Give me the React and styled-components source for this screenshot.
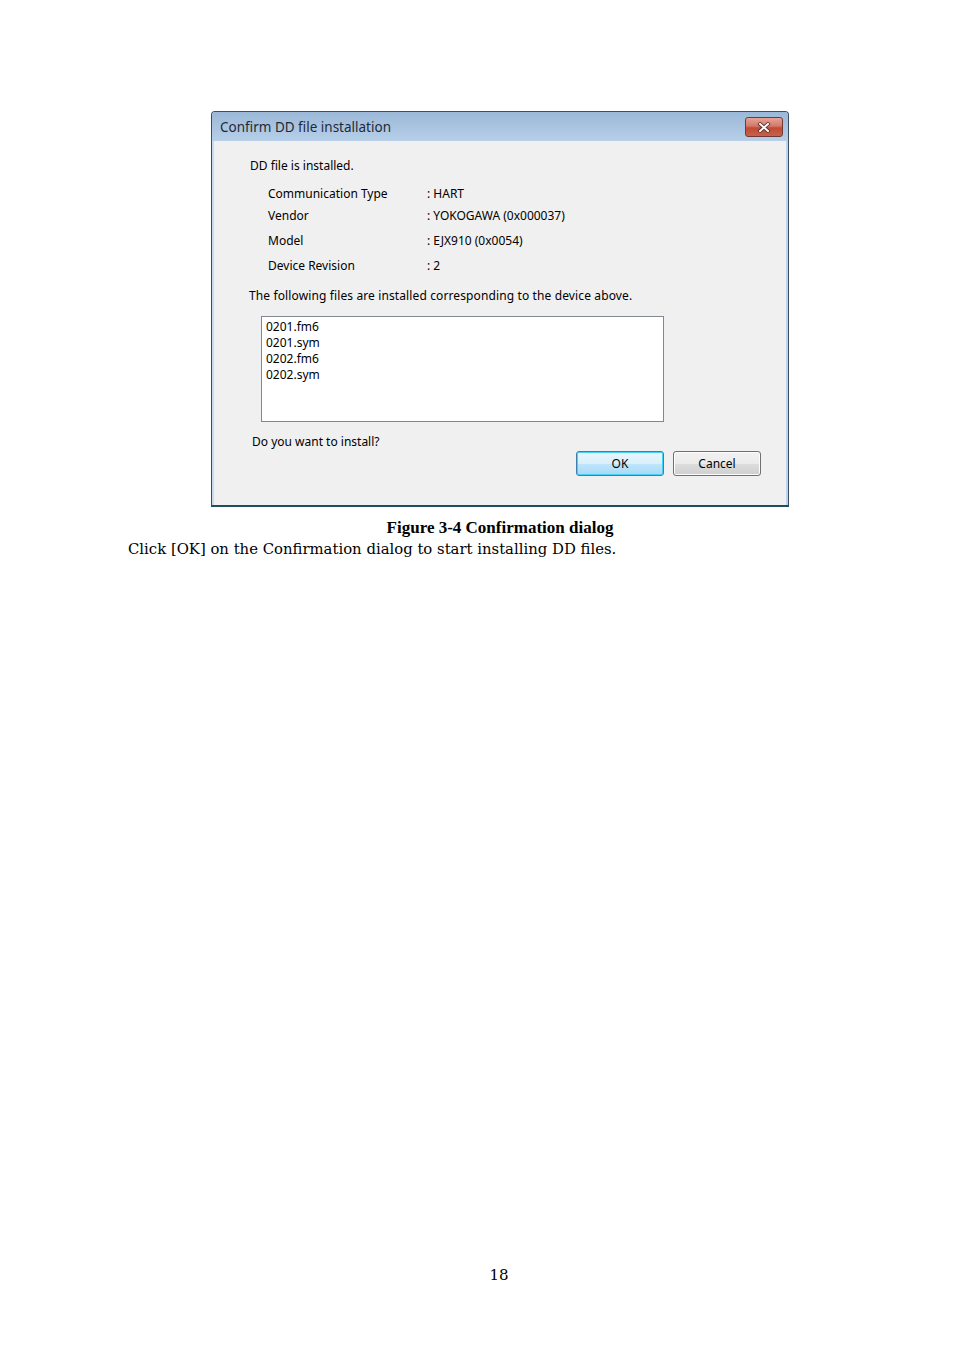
import React from "react";
import styled, { createGlobalStyle } from "styled-components";

const Global = createGlobalStyle`
  html, body { margin: 0; padding: 0; background: #ffffff; }
  body { width: 954px; height: 1350px; overflow: hidden; }
`;

const Page = styled.div`
  width: 954px;
  height: 1350px;
  box-sizing: border-box;
  padding: 111px 0 0 128px;
  display: flex;
  flex-direction: column;
  position: relative;
`;

const Column = styled.div`
  width: 744px;
  display: flex;
  flex-direction: column;
`;

const Dialog = styled.div`
  align-self: center;
  width: 578px;
  height: 396px;
  box-sizing: border-box;
  display: flex;
  flex-direction: column;
  background: #f0f0f0;
  border: 1px solid #3d4f5e;
  border-radius: 4px 4px 0 0;
  border-bottom: 2px solid #1f4f5f;
  box-shadow: inset -2px 0 0 #b9d3ec, inset 2px 0 0 #c6dbef;
  font-family: "Noto Sans", "DejaVu Sans", sans-serif;
  color: #000;
`;

const TitleBar = styled.div`
  height: 29px;
  display: flex;
  align-items: center;
  justify-content: space-between;
  padding: 0 5px 0 8px;
  background: linear-gradient(#9bb8d8, #b7cfe8);
  border-radius: 3px 3px 0 0;
`;

const Title = styled.span`
  font-size: 13.5px;
  color: #1e2a36;
`;

const Close = styled.div`
  width: 38px;
  height: 20px;
  box-sizing: border-box;
  border: 1px solid #6e3a33;
  border-radius: 3px;
  background: linear-gradient(#e8a296 0%, #d4796a 45%, #c04a35 55%, #c8624c 100%);
  display: flex;
  align-items: center;
  justify-content: center;
  margin-top: 1px;
`;

const Body = styled.div`
  flex: 1;
  display: flex;
  flex-direction: column;
  padding: 16px 27px 0 38px;
  font-size: 12px;
`;

const Heading = styled.div`
  line-height: 18px;
`;

const InfoGrid = styled.div`
  display: grid;
  grid-template-columns: 159px auto;
  margin: 10px 0 0 18px;
`;

const Cell = styled.div`
  line-height: 18px;
  height: 18px;
  margin-top: ${(p) => p.$gap || 0}px;
`;

const Following = styled.div`
  margin-top: 12px;
  line-height: 18px;
  margin-left: -1px;
  letter-spacing: 0.12px;
`;

const ListBox = styled.div`
  margin: 11px 0 0 11px;
  width: 403px;
  height: 106px;
  box-sizing: border-box;
  background: #ffffff;
  border: 1px solid #828790;
  padding: 2px 4px;
`;

const ListItem = styled.div`
  line-height: 16px;
  height: 16px;
`;

const Question = styled.div`
  margin: 11px 0 0 2px;
  line-height: 18px;
`;

const Buttons = styled.div`
  display: flex;
  justify-content: flex-end;
  gap: 9px;
  margin-top: 0;
`;

const Button = styled.div`
  width: 88px;
  height: 25px;
  box-sizing: border-box;
  border-radius: 3px;
  display: flex;
  align-items: center;
  justify-content: center;
  font-size: 12px;
  border: 1px solid ${(p) => (p.$default ? "#3c7fb1" : "#707070")};
  box-shadow: ${(p) => (p.$default ? "inset 0 0 0 1px #48d1f8" : "inset 0 0 0 1px #fcfcfc")};
  background: ${(p) =>
    p.$default
      ? "linear-gradient(#eaf6fd 0%, #d9f0fc 50%, #bee6fd 51%, #a7d9f5 100%)"
      : "linear-gradient(#f2f2f2 0%, #ebebeb 50%, #dddddd 51%, #cfcfcf 100%)"};
`;

const Caption = styled.div`
  text-align: center;
  font-family: "Liberation Serif", serif;
  font-weight: bold;
  font-size: 17px;
  line-height: 20px;
  margin-top: 11px;
`;

const Paragraph = styled.div`
  font-family: "DejaVu Serif", "Liberation Serif", serif;
  font-size: 14.85px;
  line-height: 20px;
  margin-top: 1px;
`;

const PageNumber = styled.div`
  position: absolute;
  top: 1265px;
  left: 44px;
  width: 910px;
  text-align: center;
  font-family: "DejaVu Serif", "Liberation Serif", serif;
  font-size: 15px;
  line-height: 20px;
`;

const rows = [
  ["Communication Type", ": HART", 0],
  ["Vendor", ": YOKOGAWA (0x000037)", 4],
  ["Model", ": EJX910 (0x0054)", 7],
  ["Device Revision", ": 2", 7],
];

const CloseGlyph = () => (
  <svg width="14" height="11" viewBox="0 0 14 11">
    <path d="M3 2 L11 9 M11 2 L3 9" stroke="#5a2a22" strokeWidth="3.6" strokeLinecap="square" />
    <path d="M3 2 L11 9 M11 2 L3 9" stroke="#ffffff" strokeWidth="2" strokeLinecap="square" />
  </svg>
);

export default function App() {
  return (
    <>
      <Global />
      <Page>
        <Column>
          <Dialog>
            <TitleBar>
              <Title>Confirm DD file installation</Title>
              <Close>
                <CloseGlyph />
              </Close>
            </TitleBar>
            <Body>
              <Heading>DD file is installed.</Heading>
              <InfoGrid>
                {rows.map(([k, v, g]) => (
                  <React.Fragment key={k}>
                    <Cell $gap={g}>{k}</Cell>
                    <Cell $gap={g}>{v}</Cell>
                  </React.Fragment>
                ))}
              </InfoGrid>
              <Following>The following files are installed corresponding to the device above.</Following>
              <ListBox>
                {["0201.fm6", "0201.sym", "0202.fm6", "0202.sym"].map((f) => (
                  <ListItem key={f}>{f}</ListItem>
                ))}
              </ListBox>
              <Question>Do you want to install?</Question>
              <Buttons>
                <Button $default>OK</Button>
                <Button>Cancel</Button>
              </Buttons>
            </Body>
          </Dialog>
          <Caption>Figure 3-4 Confirmation dialog</Caption>
          <Paragraph>Click [OK] on the Confirmation dialog to start installing DD files.</Paragraph>
        </Column>
        <PageNumber>18</PageNumber>
      </Page>
    </>
  );
}
